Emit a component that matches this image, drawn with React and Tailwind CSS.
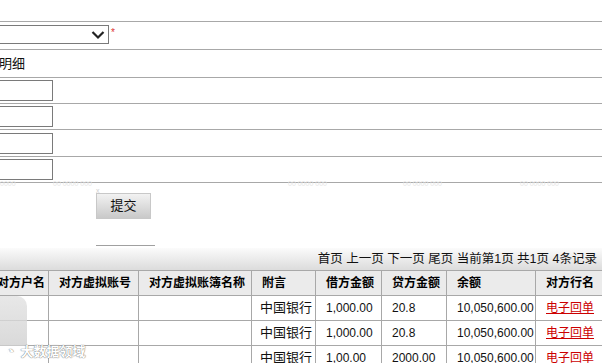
import React from "react";

const F = { fontFamily: '"Liberation Sans", "Noto Sans CJK SC", sans-serif' };

function Row({ h, children, className = "" }) {
  return (
    <div className={`flex items-center border-b border-[#a8a8a8] ${h} ${className}`}>{children}</div>
  );
}

export default function App() {
  const cols = [
    { w: "w-[62px]", t: "对方户名" },
    { w: "w-[90px]", t: "对方虚拟账号" },
    { w: "w-[113px]", t: "对方虚拟账簿名称" },
    { w: "w-[64px]", t: "附言" },
    { w: "w-[66px]", t: "借方金额" },
    { w: "w-[65px]", t: "贷方金额" },
    { w: "w-[89px]", t: "余额" },
    { w: "w-[90px]", t: "对方行名" },
  ];
  const rows = [
    ["", "", "", "中国银行", "1,000.00", "20.8", "10,050,600.00", "电子回单"],
    ["", "", "", "中国银行", "1,000.00", "20.8", "10,050,600.00", "电子回单"],
    ["", "", "", "中国银行", "1,00.00", "2000.00", "10,050,600.00", "电子回单"],
  ];
  return (
    <div className="relative w-[602px] h-[363px] overflow-hidden bg-white text-[#111]" style={F}>
      <Row h="h-[22px]" />
      <Row h="h-[28px]">
        <div className="ml-[-2px] mt-[-2px] flex h-[19px] w-[111px] items-center justify-end border border-[#7a7a7a] bg-white pr-[3px]">
          <svg width="14" height="10" viewBox="0 0 14 10">
            <path d="M1.5 2 L7 7.5 L12.5 2" fill="none" stroke="#222" strokeWidth="2.2" />
          </svg>
        </div>
        <span className="ml-[2px] mt-[-6px] text-[10px] text-[#d33]">*</span>
      </Row>
      <Row h="h-[28px]">
        <span className="ml-[-27px] text-[13px]">交易明细</span>
      </Row>
      {["h-[26px]", "h-[26px]", "h-[27px]", "h-[26px]"].map((h, i) => (
        <Row key={i} h={h}>
          <div className="ml-[-2px] h-[21px] w-[55px] border border-[#7a7a7a] bg-white" />
        </Row>
      ))}
      <div className="relative h-[65px]">
        <div className="absolute left-0 top-[-3px] flex w-full text-[7px] leading-[8px] text-[#e6e6e6]">
          <span className="w-[53px]">0000</span>
          <span className="w-[235px]">00 0000 000</span>
          <span className="w-[115px]">00 0000 000</span>
          <span className="w-[117px]">00 0000 000</span>
          <span>00 0000 000</span>
        </div>
        <span className="absolute left-[96px] top-[4px] text-[7px] leading-[8px] text-[#d0d0d0]">x</span>
        <div className="flex flex-col pl-[96px] pt-[10px]">
          <div className="flex h-[26px] w-[55px] items-center justify-center border border-[#c8c8c8] bg-gradient-to-b from-[#f2f2f2] to-[#c9c9c9] text-[13px] text-[#111]">
            提交
          </div>
          <div className="mt-[26px] h-px w-[59px] bg-[#a0a0a0]" />
        </div>
      </div>
      <div className="flex h-[22px] items-center justify-end bg-gradient-to-b from-[#fbfbfb] to-[#dcdcdc] pr-[5px] text-[12.5px] text-[#111]">
        首页&nbsp;上一页&nbsp;下一页&nbsp;尾页&nbsp;当前第1页&nbsp;共1页&nbsp;4条记录
      </div>
      <table className="ml-[-14px] w-[639px] table-fixed border-collapse text-[12px]">
        <thead>
          <tr className="h-[25px] bg-[#ebebeb]">
            {cols.map((c, i) => (
              <th key={i} className={`${c.w} border border-[#a8a8a8] pl-[10px] text-left font-bold whitespace-nowrap text-[#000]`}>
                {c.t}
              </th>
            ))}
          </tr>
        </thead>
        <tbody>
          {rows.map((r, ri) => (
            <tr key={ri} className="h-[25px]">
              {r.map((v, ci) => (
                <td key={ci} className={`border border-[#a8a8a8] whitespace-nowrap ${ci === 3 ? "pl-[8px] text-[13px]" : "pl-[10px]"}`}>
                  {ci === 7 ? <span className="text-[#c00] underline">{v}</span> : v}
                </td>
              ))}
            </tr>
          ))}
        </tbody>
      </table>
      <div className="absolute left-0 top-[296px] h-[50px] w-[27px] rounded-tr-[10px] bg-gradient-to-b from-[#e2e2e2] to-[#d0d0d0] opacity-80" />
      <div className="absolute left-[6px] top-[341px] flex items-center gap-[6px] text-[13px] font-bold text-white [text-shadow:0_0_1px_#777,0_0_1px_#777]">
        <span className="text-[14px]">◔</span>
        <span>大数据领域</span>
      </div>
    </div>
  );
}
